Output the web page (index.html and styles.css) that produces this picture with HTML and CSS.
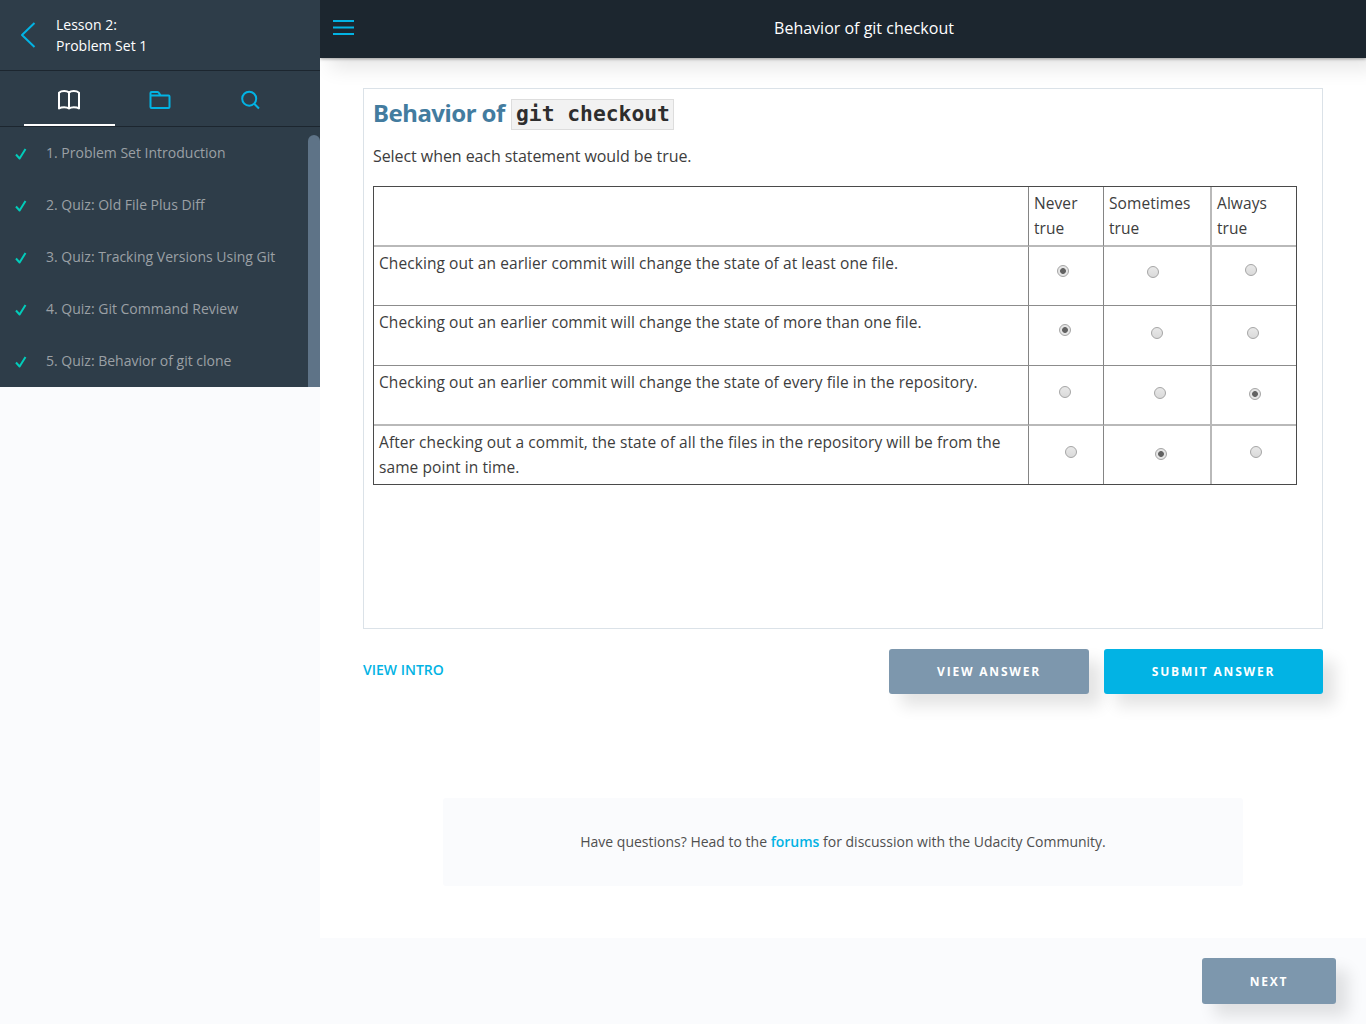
FILE: index.html
```html
<!DOCTYPE html>
<html lang="en">
<head>
<meta charset="utf-8">
<title>Behavior of git checkout</title>
<link rel="stylesheet" href="styles.css">
</head>
<body>
<div class="app">
  <aside class="sidebar">
    <div class="lesson">
      <svg class="back" width="16" height="26" viewBox="0 0 16 26"><path d="M14.500 1 2 13l12.500 12"/></svg>
      <div>Lesson 2:<br>Problem Set 1</div>
    </div>
    <nav class="tabs">
      <a class="tab active"><svg width="24" height="20" viewBox="0 0 24 20"><path d="M12 2.700C10 .5 4.500.5 2 2.700V18.500c2.500-1.700 8-1.700 10 0 2-1.700 7.500-1.700 10 0V2.700C19.500.5 14 .5 12 2.700V18.500"/></svg></a>
      <a class="tab"><svg width="22" height="20" viewBox="0 0 22 20"><path d="M1.500 17V3q0-1 1-1h6q1 0 1.500 1l1.500 2.500h8q1 0 1 1V17q0 1-1 1h-17q-1 0-1-1M1.500 5.500h10"/></svg></a>
      <a class="tab"><svg width="20" height="20" viewBox="0 0 20 20"><circle cx="8.200" cy="8.700" r="7"/><path d="m13.200 13.700 4.800 4.800"/></svg></a>
    </nav>
    <div class="list-wrap">
      <ul class="concepts">
        <li><svg viewBox="0 0 12 12"><path d="m1 6.500 3.600 4L10.500 1"/></svg>1. Problem Set Introduction</li>
        <li><svg viewBox="0 0 12 12"><path d="m1 6.500 3.600 4L10.500 1"/></svg>2. Quiz: Old File Plus Diff</li>
        <li><svg viewBox="0 0 12 12"><path d="m1 6.500 3.600 4L10.500 1"/></svg>3. Quiz: Tracking Versions Using Git</li>
        <li><svg viewBox="0 0 12 12"><path d="m1 6.500 3.600 4L10.500 1"/></svg>4. Quiz: Git Command Review</li>
        <li><svg viewBox="0 0 12 12"><path d="m1 6.500 3.600 4L10.500 1"/></svg>5. Quiz: Behavior of git clone</li>
      </ul>
      <div class="scrollbar"></div>
    </div>
  </aside>

  <div class="content">
    <header class="topbar">
      <svg class="menu" width="21" height="16" viewBox="0 0 21 16"><path d="M0 2h21M0 8.500h21M0 15h21"/></svg>
      <h1>Behavior of git checkout</h1>
    </header>
    <main class="page">
      <section class="quiz">
        <h2><span class="title-text">Behavior of</span><code>git checkout</code></h2>
        <p class="prompt">Select when each statement would be true.</p>
        <div class="grid">
          <div class="cell"></div>
          <div class="cell">Never<br>true</div>
          <div class="cell mid">Sometimes<br>true</div>
          <div class="cell">Always<br>true</div>

          <div class="cell">Checking out an earlier commit will change the state of at least one file.</div>
          <div class="cell"></div><div class="cell mid"></div><div class="cell"></div>

          <div class="cell">Checking out an earlier commit will change the state of more than one file.</div>
          <div class="cell"></div><div class="cell mid"></div><div class="cell"></div>

          <div class="cell">Checking out an earlier commit will change the state of every file in the repository.</div>
          <div class="cell"></div><div class="cell mid"></div><div class="cell"></div>

          <div class="cell">After checking out a commit, the state of all the files in the repository will be from the<br>same point in time.</div>
          <div class="cell"></div><div class="cell mid"></div><div class="cell"></div>
        </div>
        <input class="radio r1-never" type="radio" name="q1" checked>
        <input class="radio r1-sometimes" type="radio" name="q1">
        <input class="radio r1-always" type="radio" name="q1">
        <input class="radio r2-never" type="radio" name="q2" checked>
        <input class="radio r2-sometimes" type="radio" name="q2">
        <input class="radio r2-always" type="radio" name="q2">
        <input class="radio r3-never" type="radio" name="q3">
        <input class="radio r3-sometimes" type="radio" name="q3">
        <input class="radio r3-always" type="radio" name="q3" checked>
        <input class="radio r4-never" type="radio" name="q4">
        <input class="radio r4-sometimes" type="radio" name="q4" checked>
        <input class="radio r4-always" type="radio" name="q4">
      </section>
      <div class="actions">
        <a class="intro">VIEW INTRO</a>
        <button class="btn view">VIEW ANSWER</button>
        <button class="btn submit">SUBMIT ANSWER</button>
      </div>
      <div class="forum"><p>Have questions? Head to the <a>forums</a> for discussion with the Udacity Community.</p></div>
    </main>
    <footer class="footer"><button class="btn next">NEXT</button></footer>
  </div>
</div>
</body>
</html>
```
FILE: styles.css
```css
* { box-sizing: border-box; }
body {
  margin: 0;
  background: #fafbfd;
  font-family: "Open Sans", "Noto Sans", sans-serif;
  color: #4f4f4f;
}
svg { fill: none; stroke: #02b3e4; stroke-width: 2; stroke-linejoin: round; flex: none; }
.app { display: flex; height: 1024px; overflow: hidden; }

/* Sidebar */
.sidebar {
  width: 320px;
  height: 387px;
  background: #2e3d49;
  position: relative;
  z-index: 2;
  flex: none;
}
.lesson {
  height: 71px;
  display: flex;
  align-items: center;
  gap: 20px;
  padding-left: 20px;
  border-bottom: 1px solid #1c262f;
  color: #fff;
  font-size: 14px;
  line-height: 21px;
}
.tabs {
  height: 56px;
  display: flex;
  padding: 0 24px;
  border-bottom: 1px solid #1c262f;
}
.tab {
  width: 91px;
  display: flex;
  align-items: center;
  justify-content: center;
  padding-top: 4px;
  border-bottom: 2px solid transparent;
}
.tab.active { border-color: #fff; }
.tab.active svg { stroke: #fff; }
.list-wrap { height: 260px; display: flex; justify-content: space-between; }
.concepts {
  list-style: none;
  margin: 0;
  padding: 0 0 0 15px;
  font-size: 14px;
  color: #9ba0a5;
}
.concepts li { height: 52px; padding-bottom: 2px; display: flex; align-items: center; gap: 19px; white-space: nowrap; }
.concepts svg { width: 12px; height: 12px; margin-top: 3px; stroke: #02ccba; }
.scrollbar { width: 12px; margin-top: 8px; background: #5e7387; border-radius: 6px 6px 0 0; }

/* Main column */
.content { flex: 1; display: flex; flex-direction: column; }
.topbar {
  height: 58px;
  flex: none;
  display: flex;
  align-items: center;
  padding: 0 12px 2px 13px;
  background: #1c262f;
  box-shadow: 10px 10px 20px rgba(0,0,0,.1), 0 1px 3px rgba(0,0,0,.35);
  position: relative;
}
.menu { margin-bottom: 2px; }
.topbar h1 {
  flex: 1;
  margin: 0;
  padding-left: 20px;
  color: #fff;
  font-size: 16px;
  font-weight: 400;
  text-align: center;
}
.page { height: 880px; padding: 30px 43px 0; background: #fff; }
.quiz {
  height: 541px;
  position: relative;
  border: 1px solid #dbe2e8;
  padding: 9px;
  color: #3d3d3d;
}
.quiz h2 { height: 32px; margin: 0; display: flex; align-items: center; color: #437c9f; }
.title-text { width: 138px; padding-bottom: 4px; font-family: "Noto Sans", sans-serif; font-size: 24px; letter-spacing: -.5px; white-space: nowrap; }
.quiz code {
  height: 31px;
  width: 163px;
  padding-left: 4px;
  background: #f2f2f2;
  border: 1px solid #ddd;
  color: #2e2e2e;
  font: bold 21.300px/28px "DejaVu Sans Mono", monospace;
}
.prompt { margin: 14px 0 17px; font-size: 16px; line-height: 25px; letter-spacing: -.07px; }
.grid {
  display: grid;
  width: 924px;
  grid-template-columns: 655px 75px 108px 84px;
  grid-template-rows: 60px 59px 60px 60px 58px;
  border: 1px solid #4a4a4a;
}
.cell {
  padding: 4px 5px;
  border-right: 1px solid #858585;
  border-bottom: 1px solid #8c8c8c;
  font-size: 15.500px;
  line-height: 25px;
  letter-spacing: .08px;
  white-space: nowrap;
}
.cell.mid { border-right: 2px solid #b9b9b9; }
.cell:nth-child(4n) { border-right: 0; }
.cell:nth-child(-n+4), .cell:nth-child(n+13):nth-child(-n+16) { border-bottom: 2px solid #b9b9b9; }
.cell:nth-child(n+17) { border-bottom: 0; }

/* Answer inputs sit freely over the statement grid */
.radio {
  appearance: none;
  position: absolute;
  width: 12px;
  height: 12px;
  margin: 0;
  border: 1px solid #a5a5a5;
  border-radius: 50%;
  background: linear-gradient(#e8e8e8, #dadada);
}
.radio:checked { background: radial-gradient(circle, #626262 2.500px, #e5e5e5 3.300px); }
.r1-never { left: 693px; top: 176px; }
.r1-sometimes { left: 783px; top: 177px; }
.r1-always { left: 881px; top: 175px; }
.r2-never { left: 695px; top: 235px; }
.r2-sometimes { left: 787px; top: 238px; }
.r2-always { left: 883px; top: 238px; }
.r3-never { left: 695px; top: 297px; }
.r3-sometimes { left: 790px; top: 298px; }
.r3-always { left: 885px; top: 299px; }
.r4-never { left: 701px; top: 357px; }
.r4-sometimes { left: 791px; top: 359px; }
.r4-always { left: 886px; top: 357px; }

.actions { display: flex; margin-top: 20px; height: 45px; }
.intro { flex: 1; padding-top: 10px; font-size: 14px; line-height: 21px; font-weight: 600; color: #02b3e4; }
.btn {
  height: 45px;
  padding: 0;
  border: 0;
  border-radius: 3px;
  background: #7d97ad;
  box-shadow: 12px 12px 16px rgba(0,0,0,.11);
  color: #fff;
  font: 700 12px "Open Sans", sans-serif;
  letter-spacing: 1.800px;
}
.view { width: 200px; margin-right: 15px; }
.submit { width: 219px; background: #02b3e4; }
.forum {
  width: 800px;
  height: 88px;
  margin: 104px auto 0;
  padding-bottom: 2px;
  display: flex;
  align-items: center;
  justify-content: center;
  background: #fafbfd;
  border-radius: 3px;
  font-size: 14px;
}
.forum p { margin: 0; }
.forum a { color: #02b3e4; font-weight: 600; }
.footer { display: flex; justify-content: flex-end; padding: 20px 30px 0; }
.next { width: 134px; height: 46px; }
```
